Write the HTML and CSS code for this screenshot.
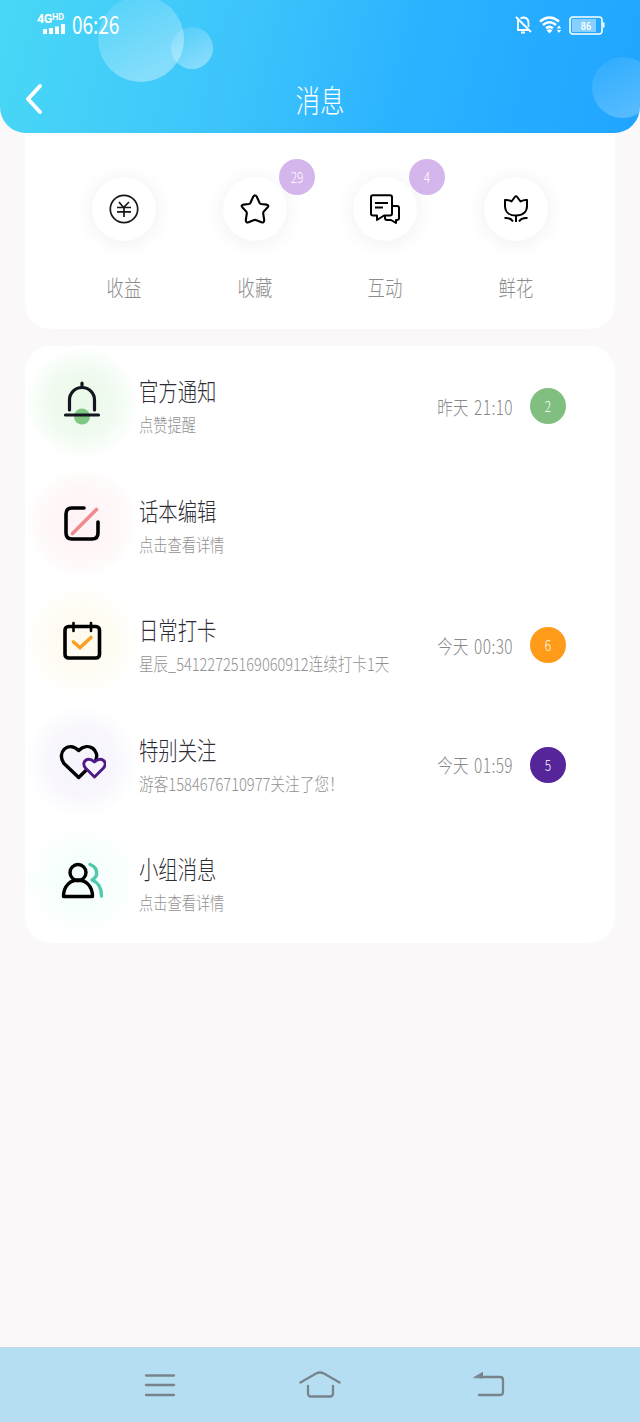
FILE: index.html
```html
<!DOCTYPE html>
<html lang="zh-CN">
<head>
<meta charset="utf-8">
<title>消息</title>
<link rel="stylesheet" href="styles.css">
</head>
<body>
<div class="screen">
  <header class="header">
    <i class="bubble bubble-large"></i>
    <i class="bubble bubble-small"></i>
    <i class="bubble bubble-edge"></i>
    <div class="status">
      <div class="signal">
        <span class="network">4G<small>HD</small></span>
        <svg width="22" height="10" viewBox="0 0 22 10" fill="#fff"><path d="M0 5h4v5H0zM6 4h4v6H6zM12 2.500h4V10h-4zM18 0h4v10h-4z"/></svg>
      </div>
      <span class="clock narrow">06:26</span>
      <div class="status-icons">
        <svg width="17" height="18" viewBox="0 0 17 18" fill="none" stroke="#fff" stroke-width="1.800"><path d="M1 1l15 15M3 4v10h10.500M5.500 2.500C9.500 0 13.500 2.500 13.500 7v4"/><path d="M6 16.500h4" stroke-width="2"/></svg>
        <svg width="23" height="18" viewBox="0 0 23 18" fill="none" stroke="#fff" stroke-width="2.500"><path d="M1 5.500Q10.500-2.500 20 5.500M4 9Q10.500 3.500 17 9M7 12.300Q10.500 9.500 14 12.300"/><path d="M10.500 17.500l-3-3.300q3-2 6 0zM20 9.500l2.200 3h-4.400zM20 17l-2.200-3h4.400z" fill="#fff" stroke="none"/></svg>
        <svg class="battery" width="36" height="19" viewBox="0 0 36 19"><rect x="1" y="1" width="32" height="17" rx="3" fill="none" stroke="#fff" stroke-width="1.600"/><path d="M3 3h24v13H3z" fill="#fff" opacity=".45"/><path d="M34 6.500h1.500v5H34z" fill="#fff"/><text x="17" y="13.500" text-anchor="middle" textLength="10.500" lengthAdjust="spacingAndGlyphs">86</text></svg>
      </div>
    </div>
    <div class="titlebar">
      <svg class="back" width="18" height="32" viewBox="0 0 18 32" fill="none" stroke="#fff" stroke-width="4" stroke-linecap="round" stroke-linejoin="round"><path d="M15 3L3 16l12 13"/></svg>
      <h1 class="narrow">消息</h1>
    </div>
  </header>

  <main class="content">
    <nav class="shortcuts">
      <div class="shortcut">
        <div class="disc">
          <svg width="30" height="30" viewBox="0 0 30 30" fill="none" stroke="#181818" stroke-width="1.700"><circle cx="15" cy="15" r="13.700"/><path d="M10 8l4.500 5.500L20 8M8 13.500h14M8 17.800h14M15 13.500V23"/></svg>
        </div>
        <span class="label narrow">收益</span>
      </div>
      <div class="shortcut">
        <div class="disc">
          <svg width="30" height="30" viewBox="0 0 30 30" fill="none" stroke="#000" stroke-width="2.100" stroke-linejoin="round"><path d="M13.300 2.500Q15 .2 16.700 2.500L19.500 8.800Q20 9.800 21.200 10L26.500 10.600Q29.500 11.200 27.500 13.600L24 17.200Q23 18.200 23.200 19.500L24.200 26Q24.200 29 21.400 28.300L16.500 26.200Q15 25.500 13.500 26.200L8.600 28.300Q5.800 29 5.800 26L6.800 19.500Q7 18.200 6 17.200L2.500 13.600Q.5 11.200 3.500 10.600L8.800 10Q10 9.800 10.500 8.800Z"/></svg>
          <b class="count"><span class="narrow">29</span></b>
        </div>
        <span class="label narrow">收藏</span>
      </div>
      <div class="shortcut">
        <div class="disc">
          <svg width="30" height="30" viewBox="0 0 30 30" fill="none" stroke="#000" stroke-width="2" stroke-linejoin="round"><path d="M3 1.200h17q2 0 2 2V19.500q0 2-2 2h-6L7 26v-4.500H3q-2 0-2-2V3.200q0-2 2-2zM5 9h13M5 13.500h8"/><path d="M22 12h5q2 0 2 2v10q0 2-2 2h-1v3l-5-3h-4q-2 0-2-2v-2"/></svg>
          <b class="count"><span class="narrow">4</span></b>
        </div>
        <span class="label narrow">互动</span>
      </div>
      <div class="shortcut">
        <div class="disc">
          <svg width="30" height="30" viewBox="0 0 30 30" fill="none" stroke="#000" stroke-width="2" stroke-linejoin="round"><path d="M4 6q3-.5 6.500 1.500L13.800 3q1.200-1.500 2.400 0L19.500 7.500Q23 5.500 26 6v6c0 6-4.500 9.500-11 9.500S4 18 4 12z"/><path d="M15 21.500V28M3.500 24q6-.5 8.500 3.500M26.500 24q-6-.5-8.500 3.500"/></svg>
        </div>
        <span class="label narrow">鲜花</span>
      </div>
    </nav>

    <ul class="messages">
      <li class="row">
        <div class="glow green">
          <svg width="48" height="48" viewBox="0 0 48 48" fill="none" stroke="#15151f" stroke-width="3.200" stroke-linecap="round"><circle cx="24" cy="37.500" r="8" fill="#81c784" stroke="none"/><path d="M24 4v4M11.500 31V21a12.500 12.500 0 0 1 25 0v10M7.500 36h33"/></svg>
        </div>
        <div class="text"><h2 class="narrow">官方通知</h2><p class="narrow">点赞提醒</p></div>
        <time class="narrow">昨天 21:10</time><b class="badge badge-green"><span class="narrow">2</span></b>
      </li>
      <li class="row">
        <div class="glow red">
          <svg width="48" height="48" viewBox="0 0 48 48" fill="none" stroke="#000" stroke-width="3.600" stroke-linecap="round"><path d="M14.500 34.500L38.500 10.500" stroke="#ef8a8d"/><path d="M26 9H14q-6 0-6 6v19q0 6 6 6h20q6 0 6-6V23"/></svg>
        </div>
        <div class="text"><h2 class="narrow">话本编辑</h2><p class="narrow">点击查看详情</p></div>
      </li>
      <li class="row">
        <div class="glow amber">
          <svg width="48" height="48" viewBox="0 0 48 48" fill="none" stroke="#000" stroke-width="3.600" stroke-linecap="round"><rect x="7" y="8.500" width="34.500" height="31.500" rx="3.500"/><path d="M15.500 5v8M33 5v8" stroke-width="2.600"/><path d="M15.500 24l6.500 5.500L33 19.500" stroke="#f9a025"/></svg>
        </div>
        <div class="text"><h2 class="narrow">日常打卡</h2><p class="narrow long">星辰_54122725169060912连续打卡1天</p></div>
        <time class="narrow">今天 00:30</time><b class="badge badge-orange"><span class="narrow">6</span></b>
      </li>
      <li class="row">
        <div class="glow violet">
          <svg width="48" height="48" viewBox="0 0 48 48" fill="none" stroke="#000" stroke-width="3.400" stroke-linejoin="round"><path d="M20.700 39.500L6 25.500C-2 15 10 2 20.700 12.500 30.500 3 42.500 12.500 37.500 23L20.700 39.500z"/><path d="M36.500 39l-9-9c-5-6 2-12 9-6 7-6 14 0 9 6z" fill="#f8f5ff" stroke="#4f1987" stroke-width="2.900"/></svg>
        </div>
        <div class="text"><h2 class="narrow">特别关注</h2><p class="narrow guest">游客1584676710977关注了您！</p></div>
        <time class="narrow">今天 01:59</time><b class="badge badge-purple"><span class="narrow">5</span></b>
      </li>
      <li class="row">
        <div class="glow teal">
          <svg width="48" height="48" viewBox="0 0 48 48" fill="none" stroke="#000" stroke-width="3.400" stroke-linecap="round" stroke-linejoin="round"><circle cx="20" cy="15.500" r="8"/><path d="M5.500 39.500C5.500 17.500 34.500 17.500 34.500 39.500zM15 23.500h10"/><path d="M32 7.500c8 3 9 12 2 15.500 6.500 2.500 9.500 8 9.500 16" stroke="#51c7ad"/></svg>
        </div>
        <div class="text"><h2 class="narrow">小组消息</h2><p class="narrow">点击查看详情</p></div>
      </li>
    </ul>
  </main>

  <footer class="navbar">
    <svg width="42" height="30" viewBox="0 0 42 30"><path d="M7 5.500h28M7 15h28M7 25h28"/></svg>
    <svg width="42" height="30" viewBox="0 0 42 30"><path d="M1.500 12.500L17 3.500q4-2 8 0l15.500 9M9 16v7.500q0 3 3 3h19q3 0 3-3V16"/></svg>
    <svg width="42" height="30" viewBox="0 0 42 30"><path d="M8 7h20q3 0 3 3v12q0 3-3 3H7"/><path d="M2 7.500l8.500-5v5z" class="arrow"/></svg>
  </footer>
</div>
</body>
</html>
```
FILE: styles.css
```css
* { box-sizing: border-box; }
body, h1, h2, p, ul { margin: 0; padding: 0; }
body { font-family: "Noto Sans CJK SC", "Noto Sans", sans-serif; font-weight: 300; background: #faf8f9; }
h1, h2, b { font-weight: 300; }
svg { display: block; flex: none; }
.screen { width: 640px; height: 1422px; display: flex; flex-direction: column; overflow: hidden; }

/* Glyphs are condensed horizontally throughout the app */
.narrow { display: block; white-space: nowrap; transform: scaleX(.79); transform-origin: center; }

.header { flex: none; position: relative; height: 133px; border-radius: 0 0 26px 26px; overflow: hidden; color: #fff; background: linear-gradient(105deg, #49d8f6 0%, #3dc5fb 36%, #2bb2ff 64%, #20a5ff 100%); }
.bubble { position: absolute; border-radius: 50%; background: linear-gradient(150deg, rgba(255,255,255,.12) 15%, rgba(255,255,255,.36) 80%); }
.bubble-large { width: 86px; height: 86px; left: 98px; top: -4px; }
.bubble-small { width: 42px; height: 42px; left: 171px; top: 27px; }
.bubble-edge { width: 61px; height: 61px; left: 592px; top: 57px; opacity: .65; }

.status { position: relative; display: flex; height: 50px; padding: 0 35px 0 37px; align-items: center; }
.signal { width: 28px; display: flex; flex-direction: column; align-items: flex-end; margin-top: -3px; }
.network { width: 28px; font: 700 12.500px/11px Roboto, sans-serif; white-space: nowrap; letter-spacing: -.3px; }
.network small { font-size: 9px; vertical-align: 3px; line-height: 1; }
.clock { font-size: 24px; line-height: 30px; margin: -3px 0 0 7px; transform-origin: left; font-weight: 400; }
.status-icons { margin-left: auto; display: flex; gap: 7px; align-items: center; }
.battery text { font: 500 11px Roboto, sans-serif; fill: #fff; }
.titlebar { position: relative; display: flex; height: 98px; padding: 0 25px; align-items: center; }
.titlebar h1 { flex: 1; margin-right: 18px; text-align: center; font-size: 31px; line-height: 40px; font-weight: 300; }

.content { flex: 1; padding: 0 25px; }
.shortcuts { display: grid; grid-template-columns: repeat(4, 1fr); height: 196px; padding: 44px 34px 0; background: #fff; border-radius: 0 0 26px 26px; }
.shortcut { display: flex; flex-direction: column; align-items: center; }
.disc { position: relative; display: grid; place-items: center; width: 64px; height: 64px; border-radius: 50%; background: #fff; box-shadow: 0 2px 22px rgba(0,0,0,.065); }
.count { position: absolute; left: 56px; top: -18px; width: 36px; height: 36px; border-radius: 50%; background: #d4b6ed; color: #fff; font-size: 15px; line-height: 36px; text-align: center; }
.label { margin-top: 29px; font-size: 22px; line-height: 32px; color: #8c8c8c; }

.messages { list-style: none; margin-top: 17px; height: 597px; background: #fff; border-radius: 26px; }
.row { display: flex; align-items: center; height: 119.500px; padding: 0 49px 0 1px; }
.glow { flex: none; display: grid; place-items: center; width: 112px; height: 112px; margin-top: -5px; border-radius: 50%; }
.green { background: radial-gradient(closest-side, #e9f9e9, #f1fbf1 60%, #fafefa 90%, #fff); }
.red { background: radial-gradient(closest-side, #fff3f4, #fff7f8 60%, #fffcfc 90%, #fff); }
.amber { background: radial-gradient(closest-side, #fffaee, #fffcf4 60%, #fffefb 90%, #fff); }
.violet { background: radial-gradient(closest-side, #f6f3fc, #f9f7fd 60%, #fdfcfe 90%, #fff); }
.teal { background: radial-gradient(closest-side, #f3fefb, #f8fffd 60%, #fcfffe 90%, #fff); }
.text { width: 250px; margin-left: 1px; padding-top: 3px; }
.text .narrow { transform-origin: left; }
.text h2 { font-size: 24.500px; line-height: 34px; color: #2d2c35; }
.text p { font-size: 18px; line-height: 32px; color: #929292; }
.text .long { transform: scaleX(.809); }
.text .guest { transform: scaleX(.815); }
.row time { margin-left: auto; padding-top: 2px; font-size: 19.500px; line-height: 30px; word-spacing: 2px; letter-spacing: .5px; color: #898989; transform-origin: right; }
.badge { flex: none; width: 36px; height: 36px; margin: 1px 0 0 17px; border-radius: 50%; color: #fff; font-size: 15px; line-height: 36px; text-align: center; }
.badge-green { background: #80bf80; }
.badge-orange { background: #ff9b18; }
.badge-purple { background: #57259a; }

.navbar { flex: none; height: 75px; padding: 0 126px 0 139px; display: grid; grid-template-columns: 160px 173px 42px; align-items: center; border-top: 1px solid #c4d9e7; background: #b6def2; }
.navbar path { fill: none; stroke: #78848c; stroke-width: 2.300; stroke-linecap: round; stroke-linejoin: round; }
.navbar .arrow { fill: #78848c; stroke-width: 1; }
```
